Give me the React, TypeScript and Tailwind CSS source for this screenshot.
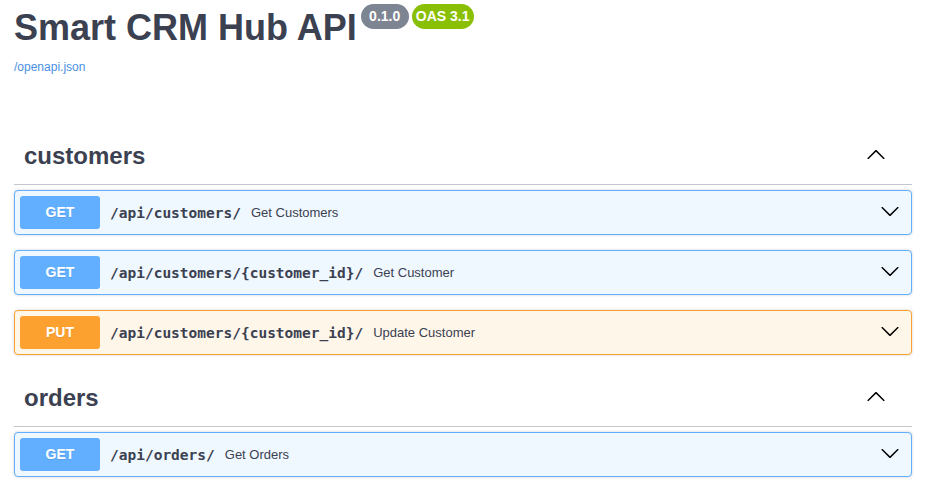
import React from 'react';

type Method = 'GET' | 'PUT';

interface Op {
  method: Method;
  path: string;
  summary: string;
}

const sections: { tag: string; ops: Op[] }[] = [
  {
    tag: 'customers',
    ops: [
      { method: 'GET', path: '/api/customers/', summary: 'Get Customers' },
      { method: 'GET', path: '/api/customers/{customer_id}/', summary: 'Get Customer' },
      { method: 'PUT', path: '/api/customers/{customer_id}/', summary: 'Update Customer' },
    ],
  },
  {
    tag: 'orders',
    ops: [{ method: 'GET', path: '/api/orders/', summary: 'Get Orders' }],
  },
];

const Arrow = ({ up = false, className = '' }: { up?: boolean; className?: string }) => (
  <svg
    viewBox="0 0 20 20"
    width={20}
    height={20}
    className={`${up ? 'rotate-180' : ''} ${className}`}
    aria-hidden="true"
  >
    <path
      fill="#000"
      d="M17.418 6.109c.272-.268.709-.268.979 0s.271.701 0 .969l-7.908 7.83c-.27.268-.707.268-.979 0l-7.908-7.83c-.27-.268-.27-.701 0-.969.271-.268.709-.268.979 0L10 13.25l7.418-7.141z"
    />
  </svg>
);

const OpBlock = ({ op }: { op: Op }) => {
  const isPut = op.method === 'PUT';
  return (
    <div
      className={`mb-[15px] flex h-[45px] items-center rounded-[4px] border px-[5px] shadow-[0_0_3px_rgba(0,0,0,0.19)] ${
        isPut ? 'border-[#fca130] bg-[#fff6ea]' : 'border-[#61affe] bg-[#eff7ff]'
      }`}
    >
      <span
        className={`flex h-[33px] w-[80px] items-center justify-center rounded-[3px] text-[14px] font-bold text-white [text-shadow:0_1px_0_rgba(0,0,0,0.1)] ${
          isPut ? 'bg-[#fca130]' : 'bg-[#61affe]'
        }`}
      >
        {op.method}
      </span>
      <span className="px-[10px] font-['DejaVu_Sans_Mono',monospace] text-[14.5px] font-bold leading-[18px] text-[#3b4151]">
        {op.path}
      </span>
      <span className="text-[13px] leading-[15px] text-[#3b4151]">{op.summary}</span>
      <Arrow className="mb-[4px] ml-auto mr-[6px]" />
    </div>
  );
};

export default function App() {
  return (
    <div className="min-h-screen bg-white pl-[14px] pr-[17px] font-['Liberation_Sans',Arial,sans-serif] text-[#3b4151]">
      <div className="flex items-start pt-[4px]">
        <h2 className="mt-[3px] text-[36px] font-bold leading-[41px]">Smart CRM Hub API</h2>
        <span className="ml-[4px] flex h-[25px] w-[48px] items-center justify-center rounded-full bg-[#7d8492] text-[14px] font-bold text-white">
          0.1.0
        </span>
        <span className="ml-[3px] flex h-[25px] w-[62px] items-center justify-center rounded-full bg-[#89bf04] text-[14px] font-bold text-white">
          OAS 3.1
        </span>
      </div>
      <a href="#" className="mt-[12px] block w-fit text-[12px] leading-[14px] text-[#4990e2]">
        /openapi.json
      </a>

      <div className="mt-[58px]">
        {sections.map((s) => (
          <div key={s.tag} className="flow-root pb-[4px]">
            <div className="mb-[5px] flex items-center border-b border-[#c4c6cb] pb-[14px] pl-[10px] pr-[26px] pt-[10px]">
              <h3 className="text-[24px] font-bold leading-[28px]">{s.tag}</h3>
              <Arrow up className="mb-[2px] ml-auto" />
            </div>
            {s.ops.map((op, i) => (
              <OpBlock key={i} op={op} />
            ))}
          </div>
        ))}
      </div>
    </div>
  );
}
